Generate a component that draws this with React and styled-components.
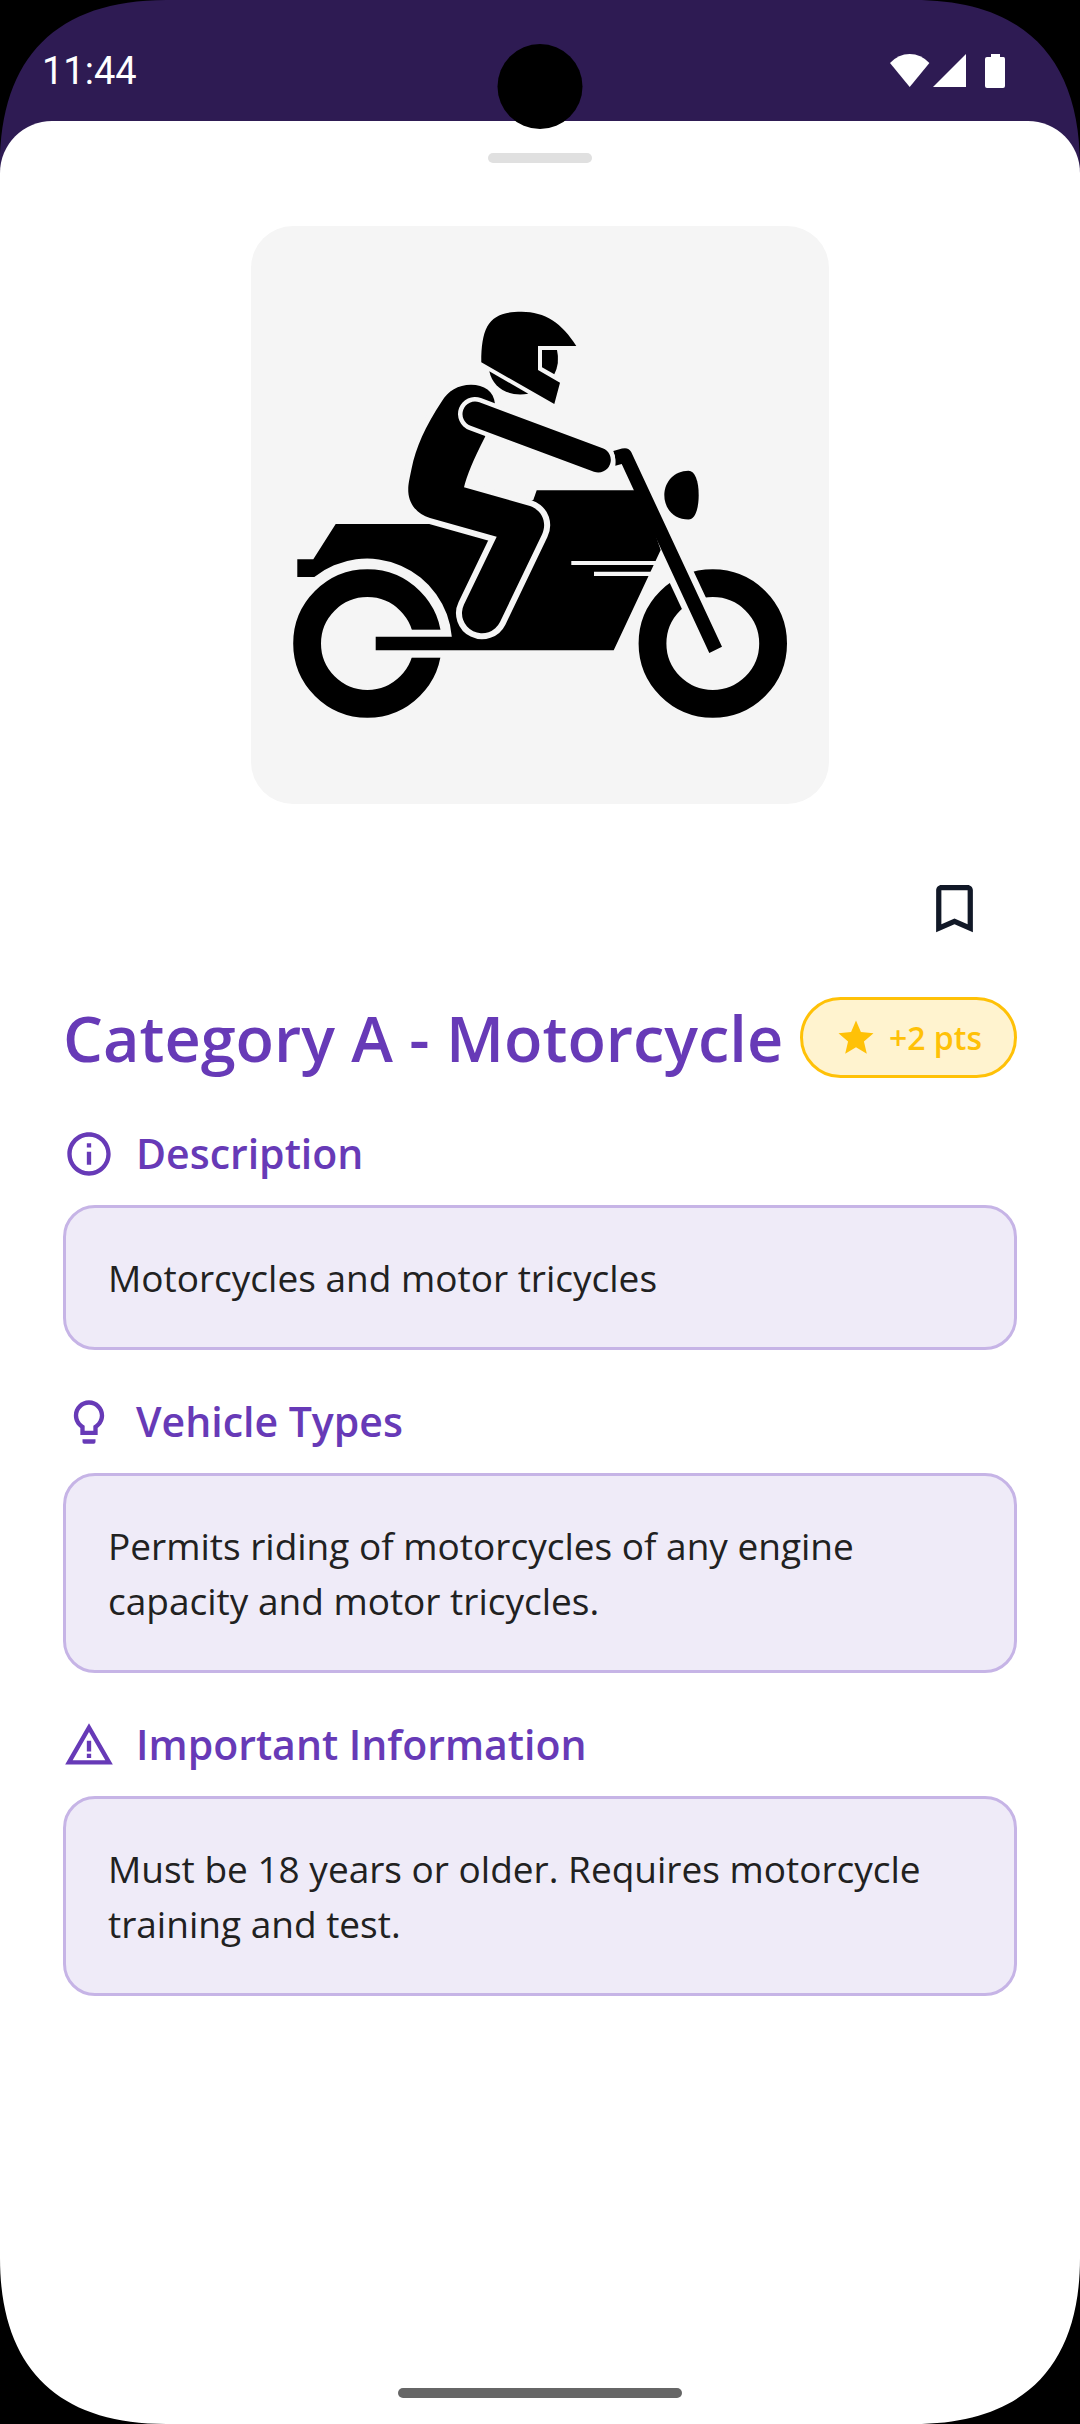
import React, { useState } from 'react'
import styled, { createGlobalStyle } from 'styled-components'
import {
  MdBookmark,
  MdBookmarkBorder,
  MdInfoOutline,
  MdStar,
  MdWarningAmber
} from 'react-icons/md'

const purple = '#673ab7'
const amber = '#ffc107'
const tile = '#f5f5f5'

const GlobalStyle = createGlobalStyle`
  * {
    box-sizing: border-box;
  }
  body {
    margin: 0;
    background-color: black;
    font-family: 'Open Sans', 'Noto Sans', sans-serif;
  }
`
const Screen = styled.div`
  position: relative;
  display: flex;
  flex-direction: column;
  min-height: 100vh;
  background-color: #2e1b53;
`
const StatusBar = styled.header`
  display: flex;
  align-items: center;
  justify-content: space-between;
  height: 121px;
  padding: 20px 74px 0 42px;
  color: white;
`
const Time = styled.time`
  font-family: Roboto, sans-serif;
  font-size: 38px;
  line-height: 44px;
`
const StatusIcons = styled.svg`
  display: block;
  width: 116px;
  height: 34px;
  fill: currentColor;
`
const Camera = styled.div`
  position: absolute;
  top: 44px;
  left: 50%;
  width: 85px;
  height: 85px;
  border-radius: 50%;
  background-color: black;
  transform: translateX(-50%);
`
const CornerSvg = styled.svg`
  position: absolute;
  ${({ $bottom }) => ($bottom ? 'bottom' : 'top')}: 0;
  ${({ $right }) => ($right ? 'right' : 'left')}: 0;
  width: 166px;
  height: 166px;
  transform: scale(
    ${({ $right }) => ($right ? -1 : 1)},
    ${({ $bottom }) => ($bottom ? -1 : 1)}
  );
  pointer-events: none;
`
const Sheet = styled.main`
  flex: 1;
  display: flex;
  flex-direction: column;
  padding: 32px 63px 26px;
  border-radius: 52px 52px 0 0;
  background-color: white;
`
const Handle = styled.div`
  align-self: center;
  width: 104px;
  height: 10px;
  border-radius: 5px;
  background-color: #e0e0e0;
`
const Picture = styled.div`
  align-self: center;
  width: 578px;
  max-width: 100%;
  margin-top: 63px;
  border-radius: 42px;
  background-color: ${tile};
  overflow: hidden;

  svg {
    display: block;
    width: 100%;
  }
`
const BookmarkButton = styled.button`
  align-self: flex-end;
  display: flex;
  align-items: center;
  justify-content: center;
  width: 126px;
  height: 126px;
  margin: 41px 0 26px;
  padding: 0;
  border: none;
  background: none;
  color: #111827;
  font-size: 63px;
  cursor: pointer;
`
const TitleRow = styled.div`
  display: flex;
  align-items: center;
  justify-content: space-between;
  margin-bottom: 4px;
`
const Title = styled.h1`
  margin: 0;
  color: ${purple};
  font-size: 63px;
  font-weight: 600;
  line-height: 81px;
`
const Badge = styled.div`
  flex: none;
  display: flex;
  align-items: center;
  gap: 12px;
  height: 81px;
  padding: 0 32px;
  border: 3px solid ${amber};
  border-radius: 41px;
  background-color: #fff3cf;
  color: ${amber};
  font-size: 32px;
  font-weight: 600;

  svg {
    font-size: 42px;
  }
`
const Section = styled.section`
  margin-top: 40px;
`
const SectionHeading = styled.h2`
  display: flex;
  align-items: center;
  gap: 21px;
  margin: 0 0 20px;
  color: ${purple};
  font-size: 41px;
  font-weight: 600;
  line-height: 63px;

  svg {
    width: 52px;
    height: 52px;
  }
`
const SectionText = styled.p`
  margin: 0;
  padding: 42px;
  border: 3px solid #c6b4e6;
  border-radius: 32px;
  background-color: #efebf8;
  color: #212121;
  font-size: 37px;
  line-height: 55px;
`
const HomeIndicator = styled.div`
  align-self: center;
  width: 284px;
  height: 10px;
  margin-top: auto;
  border-radius: 5px;
  background-color: #666666;
`

const Corner = ({ right, bottom }) => (
  <CornerSvg $right={right} $bottom={bottom} viewBox="0 0 166 166" aria-hidden="true">
    <path d="M0 0H166C57 0 0 57 0 166Z" />
  </CornerSvg>
)

const Bulb = () => (
  <svg viewBox="0 0 24 24" fill="currentColor" aria-hidden="true">
    <path d="M9 20H15V21.200Q15 22 14.200 22H9.800Q9 22 9 21.200Z" />
    <path d="M12 2C8.140 2 5 5.140 5 9c0 2.380 1.190 4.470 3 5.740V18h8v-3.260c1.810-1.270 3-3.360 3-5.740 0-3.860-3.140-7-7-7zm2.850 11.100L14 13.700V16h-4v-2.300l-.85-.6C7.800 12.160 7 10.630 7 9c0-2.760 2.240-5 5-5s5 2.240 5 5c0 1.630-.8 3.160-2.150 4.100z" />
  </svg>
)

const Motorcycle = () => (
  <svg viewBox="251 226 578 578" role="img" aria-label="Motorcycle rider">
    {/* rear wheel, cut open for the swingarm */}
    <circle cx="367.4" cy="643.5" r="60.3" fill="none" stroke="black" strokeWidth="27.8" />
    <rect x="390" y="629.7" width="60" height="28" fill={tile} />
    {/* front wheel, cut open for the fork */}
    <circle cx="712.8" cy="643.5" r="60.3" fill="none" stroke="black" strokeWidth="27.8" />
    <path d="M659 560L679 540L735 660H705.8Z" fill={tile} />
    {/* frame */}
    <path d="M297.3 559.3H313.3L335.7 524H430L533.3 500L536.7 490.3H640L660.7 550L613.7 650.3H375.7V636.7H451.8A85 85 0 0 0 314.3 577H297.3Z" />
    <path d="M571.3 561H656V565H571.3ZM594 571.7H652V576H594Z" fill={tile} />
    {/* fork and headlight */}
    <path d="M613.3 451L622 448.6Q628.600 447 631.200 452L722 646.7L709.3 653L621.7 464L615.3 465.700Q616.300 458 613.300 451Z" />
    <path d="M688.500 470.700C674 470.700 664.300 482 664.300 495C664.300 509 674 519.500 688.500 519.500C695 519.500 698.700 509 698.700 495C698.700 481 695 470.700 688.500 470.700Z" />
    {/* body and leg */}
    <path
      d="M495 404C494 391 484 384.700 471 384.700C458 384.700 448 391 441.700 401.500C425 427 416 447 411.500 469C409 481 408 485 408.300 492C409 504 417 514 430 518L496.700 536.700L464 604.500A19.600 19.600 0 0 0 500 622L542 534.500C546.500 525 544.500 511.500 530 506L464 487.300Q468 470 485 437Z"
      fill="black"
      stroke={tile}
      strokeWidth="12"
      paintOrder="stroke"
    />
    {/* arm */}
    <path d="M475 414L598.300 460" stroke={tile} strokeWidth="34" strokeLinecap="round" />
    <path d="M475 414L598.300 460" stroke="black" strokeWidth="25" strokeLinecap="round" />
    {/* helmet */}
    <path d="M481.300 362.300C481.300 325 490 311.700 521.700 311.700C545 311.700 562 323 576.300 346H538V370L560 382.700L554.300 404Z" />
    <path d="M542 350H557Q560 363 554.300 374.300L542 367.300Z" />
    <path d="M489.300 371.300L528.300 393.700C508 397 493 388 489.300 371.300Z" />
  </svg>
)

const InfoSection = ({ icon, title, children }) => (
  <Section>
    <SectionHeading>
      {icon}
      {title}
    </SectionHeading>
    <SectionText>{children}</SectionText>
  </Section>
)

const App = () => {
  const [saved, setSaved] = useState(false)

  return (
    <>
      <GlobalStyle />
      <Screen>
        <StatusBar>
          <Time>11:44</Time>
          <StatusIcons viewBox="0 0 116 34" aria-hidden="true">
            <path d="M0 9Q8.500 0 19.700 0T39.400 9L19.700 33Z" />
            <path d="M43 33L76 0V33Z" />
            <path d="M101 0H110V3H113.500Q115 3 115 5V32Q115 34 113 34H97Q95 34 95 32V5Q95 3 97 3H101Z" />
          </StatusIcons>
        </StatusBar>
        <Sheet>
          <Handle />
          <Picture>
            <Motorcycle />
          </Picture>
          <BookmarkButton
            type="button"
            aria-label="Bookmark"
            aria-pressed={saved}
            onClick={() => setSaved(!saved)}
          >
            {saved ? <MdBookmark /> : <MdBookmarkBorder />}
          </BookmarkButton>
          <TitleRow>
            <Title>Category A - Motorcycle</Title>
            <Badge>
              <MdStar />
              +2 pts
            </Badge>
          </TitleRow>
          <InfoSection icon={<MdInfoOutline />} title="Description">
            Motorcycles and motor tricycles
          </InfoSection>
          <InfoSection icon={<Bulb />} title="Vehicle Types">
            Permits riding of motorcycles of any engine capacity and motor tricycles.
          </InfoSection>
          <InfoSection icon={<MdWarningAmber />} title="Important Information">
            Must be 18 years or older. Requires motorcycle training and test.
          </InfoSection>
          <HomeIndicator />
        </Sheet>
        <Camera />
        <Corner />
        <Corner right />
        <Corner bottom />
        <Corner right bottom />
      </Screen>
    </>
  )
}

export default App
